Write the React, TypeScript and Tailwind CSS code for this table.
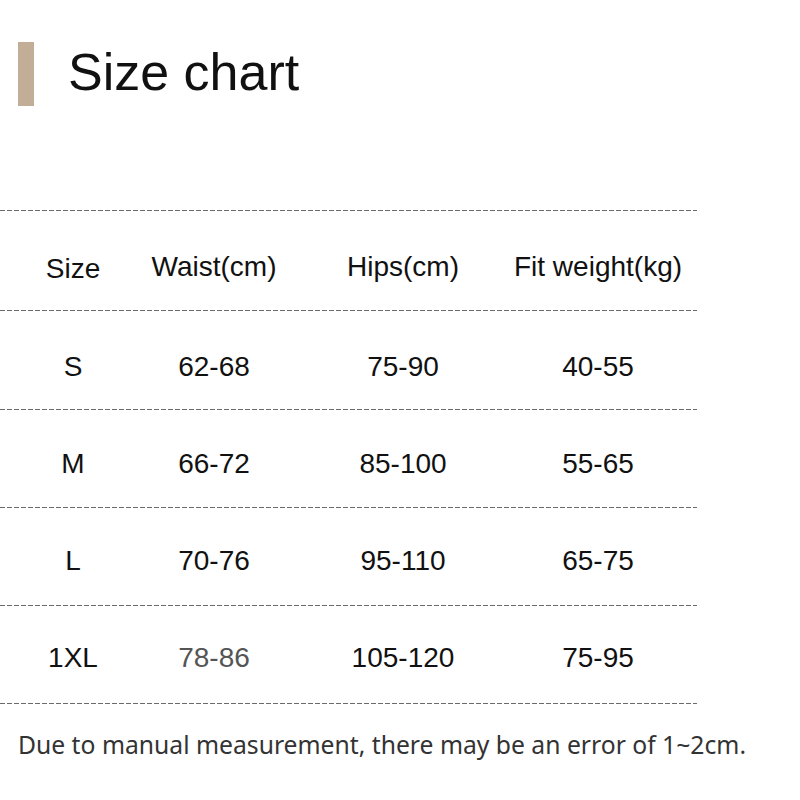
import React from "react";

const rows: { size: string; waist: string; hips: string; weight: string; muted?: boolean; pad: string }[] = [
  { size: "S", waist: "62-68", hips: "75-90", weight: "40-55", pad: "h-[98px] pt-[14px]" },
  { size: "M", waist: "66-72", hips: "85-100", weight: "55-65", pad: "h-[97px] pt-[10px]" },
  { size: "L", waist: "70-76", hips: "95-110", weight: "65-75", pad: "h-[97px] pt-[8px]" },
  { size: "1XL", waist: "78-86", hips: "105-120", weight: "75-95", muted: true, pad: "h-[97px] pt-[6px]" },
];

function Dashed() {
  return (
    <div className="h-px w-[697px] bg-[repeating-linear-gradient(to_right,#6b6b6b_0_5px,transparent_5px_7px)]" />
  );
}

const grid =
  "grid grid-cols-[146px_136px_242px_148px] items-center justify-items-center whitespace-nowrap text-[28px]";

export default function App() {
  return (
    <div
      className="w-[800px] h-[800px] bg-white text-[#111]"
      style={{ fontFamily: '"Liberation Sans", Arial, sans-serif' }}
    >
      <div className="flex items-center pt-[42px] pl-[18px]">
        <div className="w-4 h-16 bg-[#c2ad96]" />
        <h1 className="ml-[34px] text-[52px] leading-none text-[#111] -mt-1">Size chart</h1>
      </div>

      <div className="mt-[104px]">
        <Dashed />
        <div className={`${grid} h-[99px] pt-[12px]`}>
          <span className="pt-1">Size</span>
          <span>Waist(cm)</span>
          <span>Hips(cm)</span>
          <span>Fit weight(kg)</span>
        </div>
        <Dashed />
        {rows.map((r) => (
          <div key={r.size}>
            <div className={`${grid} ${r.pad}`}>
              <span>{r.size}</span>
              <span className={r.muted ? "text-[#555]" : ""}>{r.waist}</span>
              <span>{r.hips}</span>
              <span>{r.weight}</span>
            </div>
            <Dashed />
          </div>
        ))}
      </div>

      <p
        className="mt-[29px] pl-[18px] text-[24.7px] leading-none text-[#333]"
        style={{ fontFamily: '"Noto Sans", "Open Sans", sans-serif' }}
      >
        Due to manual measurement, there may be an error of 1~2cm.
      </p>
    </div>
  );
}
